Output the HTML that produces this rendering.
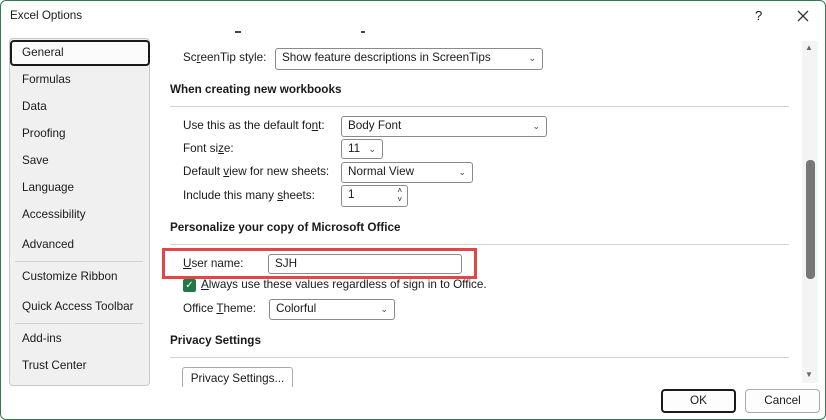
<!DOCTYPE html>
<html><head><style>
*{margin:0;padding:0;box-sizing:border-box}
body{width:826px;height:420px;overflow:hidden;background:#fff;font-family:"Liberation Sans",sans-serif;font-size:11.7px;color:#1a1a1a;position:relative}
.win{position:absolute;left:0;top:0;width:826px;height:420px;border:1px solid #2e7d4f;border-radius:6px;background:#fff}
.a{position:absolute;white-space:nowrap}
.nav{position:absolute;left:8px;top:37px;width:141px;height:348px;background:#f0f0f0;border:1px solid #c8c8c8;border-radius:4px}
.nav .a{left:12px}
.sel{position:absolute;left:0;top:1px;width:140px;height:26px;border:2px solid #1a1a1a;border-radius:4px;background:#fbfbfb}
.sep{position:absolute;left:5px;width:128px;height:1px;background:#d0d0d0}
.h{font-weight:bold;font-size:11.7px}
.line{position:absolute;left:169px;width:619px;height:1px;background:#d4d4d4}
.box{position:absolute;border:1px solid #8a8a8a;border-radius:3px;background:#fff;padding:2px 6px;font-size:11.7px;white-space:nowrap}
.chev{position:absolute;right:6px;top:4px;font-size:9px;color:#444}
.btn{position:absolute;border:1px solid #aaa;border-radius:4px;background:#fdfdfd;text-align:center;line-height:22px}
u{text-decoration:underline}
</style></head><body><div class="win">
<div class="a" style="left:9px;top:8px">Excel Options</div>
<div class="a" style="left:754px;top:7px;font-size:13px">?</div>
<svg style="position:absolute;left:796px;top:9px" width="12" height="12"><path d="M1 1L11 11M11 1L1 11" stroke="#333" stroke-width="1.3"/></svg>

<div class="a" style="left:234px;top:30px;width:6px;height:2px;background:#444"></div>
<div class="a" style="left:360px;top:30px;width:4px;height:2px;background:#444"></div>

<div class="nav">
<div class="sel"></div>
<div class="a" style="top:7px">General</div>
<div class="a" style="top:34px">Formulas</div>
<div class="a" style="top:61px">Data</div>
<div class="a" style="top:88px">Proofing</div>
<div class="a" style="top:115px">Save</div>
<div class="a" style="top:142px">Language</div>
<div class="a" style="top:169px">Accessibility</div>
<div class="a" style="top:199px">Advanced</div>
<div class="sep" style="top:222px"></div>
<div class="a" style="top:231px">Customize Ribbon</div>
<div class="a" style="top:261px">Quick Access Toolbar</div>
<div class="sep" style="top:284px"></div>
<div class="a" style="top:293px">Add-ins</div>
<div class="a" style="top:320px">Trust Center</div>
</div>

<div class="a" style="left:182px;top:50px">Sc<u>r</u>eenTip style:</div>
<div class="box" style="left:274px;top:47px;width:268px;height:22px">Show feature descriptions in ScreenTips<span class="chev">⌄</span></div>

<div class="a h" style="left:169px;top:82px">When creating new workbooks</div>
<div class="line" style="top:105px"></div>
<div class="a" style="left:182px;top:118px">Use this as the default fo<u>n</u>t:</div>
<div class="box" style="left:340px;top:115px;width:206px;height:21px">Body Font<span class="chev">⌄</span></div>
<div class="a" style="left:182px;top:141px">Font si<u>z</u>e:</div>
<div class="box" style="left:340px;top:138px;width:42px;height:20px">11<span class="chev">⌄</span></div>
<div class="a" style="left:182px;top:164px">Default <u>v</u>iew for new sheets:</div>
<div class="box" style="left:340px;top:161px;width:132px;height:21px">Normal View<span class="chev">⌄</span></div>
<div class="a" style="left:182px;top:188px">Include this many <u>s</u>heets:</div>
<div class="box" style="left:340px;top:184px;width:67px;height:22px">1<span style="position:absolute;right:5px;top:0;font-size:8px;line-height:9px">˄<br>˅</span></div>

<div class="a h" style="left:169px;top:220px">Personalize your copy of Microsoft Office</div>
<div class="line" style="top:243px"></div>
<div style="position:absolute;left:161px;top:247px;width:315px;height:31px;border:3px solid #e04848"></div>
<div class="a" style="left:182px;top:256px"><u>U</u>ser name:</div>
<div class="box" style="left:267px;top:253px;width:194px;height:20px">SJH</div>
<div style="position:absolute;left:182px;top:278px;width:13px;height:13px;background:#1f7a45;border-radius:2px;color:#fff;font-size:10px;line-height:13px;text-align:center">✓</div>
<div class="a" style="left:200px;top:277px"><u>A</u>lways use these values regardless of sign in to Office.</div>
<div class="a" style="left:182px;top:301px">Office <u>T</u>heme:</div>
<div class="box" style="left:268px;top:298px;width:126px;height:21px">Colorful<span class="chev">⌄</span></div>

<div class="a h" style="left:169px;top:333px">Privacy Settings</div>
<div class="line" style="top:356px"></div>
<div style="position:absolute;left:181px;top:366px;width:111px;height:20px;border:1px solid #aaa;border-bottom:none;border-radius:3px 3px 0 0;overflow:hidden;text-align:center;padding-top:4px">Privacy Settings...</div>
<div style="position:absolute;left:160px;top:386px;width:640px;height:4px;background:#fff"></div>

<div style="position:absolute;left:801px;top:40px;width:16px;height:342px;background:#f4f4f4"></div>
<div class="a" style="left:804px;top:42px;font-size:8px;color:#666">▲</div>
<div class="a" style="left:804px;top:369px;font-size:8px;color:#666">▼</div>
<div style="position:absolute;left:805px;top:159px;width:9px;height:119px;background:#777;border-radius:4px"></div>

<div class="btn" style="left:660px;top:388px;width:75px;height:24px;border:2px solid #1a1a1a;line-height:20px">OK</div>
<div class="btn" style="left:744px;top:388px;width:75px;height:24px">Cancel</div>
</div></body></html>
